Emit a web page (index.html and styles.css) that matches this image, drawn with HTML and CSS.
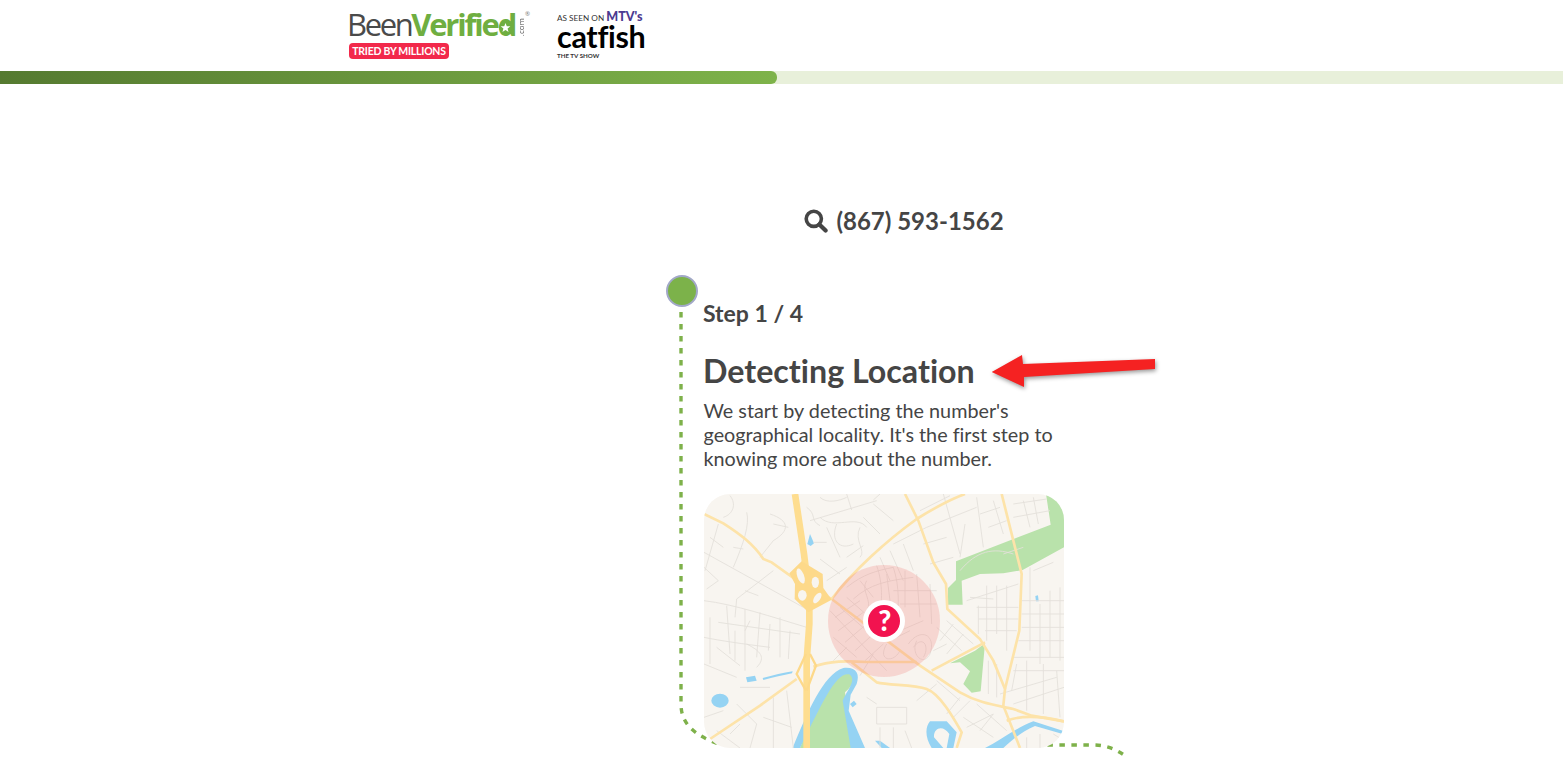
FILE: index.html
```html
<!DOCTYPE html>
<html lang="en">
<head>
    <meta charset="UTF-8">
    <title>BeenVerified - Detecting Location</title>
    <link rel="stylesheet" href="styles.css">
</head>
<body>

    <!-- Logos -->
    <header class="header">
        <div class="brand">
            <div class="brand-name">
                <span class="brand-been">Been</span><span class="brand-verified">Verified<svg class="brand-star" viewBox="0 0 20 20" width="13" height="13"><circle cx="10" cy="10" r="10" fill="#6fae41"></circle><path d="M10 3 L12 8 L17.5 8.2 L13.2 11.6 L14.7 17 L10 13.9 L5.3 17 L6.8 11.6 L2.5 8.2 L8 8 Z" fill="#ffffff"></path></svg></span>
                <span class="brand-com">.com</span>
                <span class="brand-reg">®</span>
            </div>
            <div class="brand-badge">TRIED BY MILLIONS</div>
        </div>
        <div class="catfish">
            <div class="catfish-top">AS SEEN ON <span class="catfish-mtv">MTV's</span></div>
            <div class="catfish-name">catfish</div>
            <div class="catfish-sub">THE TV SHOW</div>
        </div>
    </header>

    <!-- Progress bar -->
    <div class="progress">
        <div class="progress-fill"></div>
    </div>

    <main class="content">
        <div class="search-row">
            <svg class="search-icon" viewBox="0 0 24 24" width="24" height="24">
                <circle cx="9.8" cy="9.8" r="7.6" fill="none" stroke="#454545" stroke-width="3.6"></circle>
                <path d="M15.4 15.4 L21.6 21.6" fill="none" stroke="#454545" stroke-width="4.2" stroke-linecap="round"></path>
            </svg>
            <span class="search-number">(867) 593-1562</span>
        </div>

        <section class="step">
            <!-- Timeline behind the step -->
            <svg class="timeline" viewBox="0 0 480 480" width="480" height="480">
                <path d="M5 5 V397 C5 416 17 428 45 438 H417 C430 438 440 442 451 450" fill="none" stroke="#7eb14a" stroke-width="3.4" stroke-dasharray="5.5 6.5"></path>
            </svg>
            <span class="step-dot"></span>

            <div class="step-count">Step 1 / 4</div>
            <h1 class="step-title">Detecting Location</h1>
            <p class="step-text">We start by detecting the number's geographical locality. It's the first step to knowing more about the number.</p>

            <svg class="step-arrow" viewBox="0 0 170 40" width="170" height="40">
                <path d="M1.7 22 L32 5 L33 14 L165 9 L165 19 L34 27 L34 37 Z" fill="#f52222"></path>
            </svg>

            <!-- Map, drawn in its own coordinates -->
            <svg class="map" viewBox="132 30 1080 762" width="360" height="254">
                <rect x="132" y="30" width="1080" height="762" fill="#f8f5f0"></rect>

                <!-- parks and water -->
                <g fill="#b9e2ab">
                    <path d="M1158 30 H1212 V190 L1088 258 L1030 268 L960 270 L905 290 L908 362 H864 V312 L888 288 V232 L1172 122 Z"></path>
                    <path d="M870 538 L945 500 L975 478 L962 622 L935 626 L910 600 L930 562 L900 535 Z"></path>
                    <path d="M455 700 C490 640 520 570 565 568 C590 575 585 600 555 625 L575 792 H420 Z"></path>
                </g>
                <g fill="#95d3f3">
                    <path d="M398 792 C440 690 490 570 550 552 C590 548 600 570 590 600 L572 632 L566 680 L615 792 H572 L548 650 C560 620 590 590 570 572 C530 560 490 650 420 792 Z"></path>
                    <ellipse cx="180" cy="650" rx="26" ry="21"></ellipse>
                    <path d="M258 580 L285 575 L290 590 L262 595 Z"></path>
                    <path d="M308 582 C340 574 370 566 398 562 L396 568 C370 574 340 580 310 588 Z"></path>
                    <path d="M442 180 L450 150 L462 178 L452 186 Z"></path>
                    <path d="M570 660 L582 650 L590 660 L578 670 Z"></path>
                    <path d="M1126 336 L1134 334 L1136 352 L1128 352 Z"></path>
                    <path d="M645 770 L665 792 H690 L660 770 Z"></path>
                </g>
                <path d="M975 792 C1020 770 1070 730 1120 712 L1208 740 V750 L1125 726 C1080 745 1050 775 1030 792 Z M810 712 H860 L890 745 L880 792 H860 L868 750 C850 722 820 730 822 760 L850 792 H815 C795 760 795 730 810 712 Z" fill="#95d3f3"></path>

                <!-- minor streets -->
                <g fill="none" stroke="#e3e0da" stroke-width="2.6">
                    <path d="M132 205 L430 370 M132 350 C220 360 340 400 440 430 M132 460 C180 470 250 480 330 490 M150 400 V540 M200 365 L210 510 M255 375 V560 M300 385 L290 520 M360 400 V520 M132 540 L230 580 M260 480 C300 500 320 520 290 550 M175 415 L420 450 M225 440 V530 M330 420 L325 500 M390 440 L385 525 M170 490 L240 545 M270 410 L255 440"></path>
                    <path d="M175 120 L135 260 M260 85 C270 120 250 180 220 250 M330 90 C390 110 390 140 340 170 L300 220 M132 250 L175 290 L140 315 M340 260 L230 345 L225 400 M255 320 L295 335 M210 35 C230 60 220 90 190 100 M150 160 L190 190 M220 190 L250 195 M340 120 L385 130"></path>
                    <path d="M440 70 C470 90 450 110 480 125 M450 110 L650 50 M560 30 L575 78 M640 48 L660 30 M480 100 C520 140 590 90 620 130 M530 120 C510 170 540 200 580 180 M610 100 L660 150 M500 130 L540 220 M460 175 H500 M480 225 L540 270 M500 290 L560 250 M600 130 C580 170 620 200 600 220 M640 60 L700 110 M480 40 C500 60 540 50 560 40 M560 220 L610 185"></path>
                    <path d="M780 80 L870 35 M800 130 L950 70 M850 30 L900 210 M915 120 L900 220 M950 40 L970 190 M1000 50 L1030 150 M1060 60 L1160 45 M1060 100 L1170 80 M1090 50 L1110 130 M700 180 L800 130 M690 200 L730 290 M730 180 L760 260 M660 220 L690 290 M1120 40 L1135 120 M790 180 L860 160 M810 240 L880 220 M960 90 L1020 70 M985 130 L1040 110"></path>
                    <path d="M900 260 C950 200 1000 190 1060 210 M1030 210 L1090 190 M1120 260 L1180 235 M920 350 L1075 300 M980 305 V470 M1010 305 V450 M1040 305 V500 M955 365 V450 M950 370 H1075 M955 405 H1075 M975 440 H1070 M1110 250 V500 M1140 360 V540 M1170 320 V520 M1200 310 V530 M1085 350 H1212 M1075 470 H1212 M1085 430 H1212 M1085 390 H1212 M930 340 L1000 345"></path>
                    <path d="M560 310 C610 270 650 260 700 250 M580 345 C630 300 680 290 760 280 M650 245 C670 300 665 360 660 380 M700 250 C720 310 715 370 712 400 M735 260 V370 M770 270 L780 400 M810 300 L815 420 M600 290 L640 340 M700 320 H830 M720 360 H830 M525 400 L600 350 M535 440 L610 385 M555 475 L620 420 M585 500 L640 450 M615 530 L670 480 M510 380 L680 560 M640 510 L600 575 M680 480 C650 530 700 540 720 500 M745 480 C780 430 830 450 810 510 C790 550 750 510 770 470 M760 490 C790 450 810 490 790 520 M830 430 L905 500 M860 410 L940 480 M880 420 L840 470 M910 450 L860 510 M820 500 L860 480 M620 290 C600 320 640 350 620 380 M680 270 L690 350 M540 370 L620 440 M560 340 L640 410 M720 440 L790 410 M690 470 L750 440 M520 460 L590 520 M560 490 L520 530"></path>
                    <path d="M650 670 H740 V720 H650 Z M660 730 V792 M700 730 V792 M735 740 L755 792 M770 650 L830 600 M830 590 L900 650 M900 640 L860 690 M930 650 L880 700 M910 700 L1000 760 M950 660 L1040 740 M1000 690 L960 740 M1020 630 L1190 580 M1060 660 L1212 610 M1100 530 V680 M1150 540 V690 M1190 560 L1200 700 M985 530 V630 M1010 540 V640 M1055 620 L1070 540 M1060 520 H1212 M1060 560 H1212 M920 730 L1000 690 M1180 750 L1212 770 M1100 760 V792 M1140 750 V792 M620 640 L650 660"></path>
                    <path d="M132 700 L190 680 M230 660 L290 720 L270 792 M170 740 L240 792 M340 640 V792 M380 620 L400 792 M310 700 L395 730 M210 750 L240 720 M240 610 L330 610"></path>
                </g>

                <!-- secondary roads -->
                <g fill="none" stroke="#fde3a9" stroke-width="8">
                    <path d="M132 90 L190 118 C240 150 280 180 310 225 L335 235 L405 285 L515 345 L780 545 L900 625 C960 660 1020 665 1060 675 L1115 695 L1212 712"></path>
                    <path d="M150 765 L300 665 L410 585"></path>
                    <path d="M515 345 C580 260 680 170 770 105 C810 80 860 50 915 30"></path>
                    <path d="M735 30 L775 110 L820 235 L858 300 L862 375 L960 465 L1000 530 L1035 615 L1030 665 L1080 792"></path>
                    <path d="M1025 30 L1085 270 L1078 440 L1035 615"></path>
                    <path d="M460 548 C510 530 560 530 620 534 H770"></path>
                    <path d="M575 535 L650 595 C690 605 760 600 800 615 C840 630 880 700 905 745 L890 792"></path>
                    <path d="M815 560 L975 475"></path>
                    <path d="M1040 710 C1080 695 1140 695 1212 712"></path>
                </g>

                <!-- freeway and interchange -->
                <g fill="none" stroke="#fedd8f" stroke-width="20">
                    <path d="M405 30 L432 210 L448 340 V420 L440 530 V792"></path>
                </g>
                <path d="M425 232 L388 268 L405 300 L404 345 L445 385 L515 347 L490 312 L488 270 Z" fill="#fdd98a"></path>
                <g fill="#f8f5f0">
                    <ellipse cx="422" cy="276" rx="10" ry="24" transform="rotate(-20 422 276)"></ellipse>
                    <ellipse cx="466" cy="295" rx="11" ry="17"></ellipse>
                    <ellipse cx="427" cy="334" rx="13" ry="16"></ellipse>
                    <ellipse cx="472" cy="342" rx="9" ry="18" transform="rotate(35 472 342)"></ellipse>
                </g>
                <g fill="none" stroke="#fdd98a" stroke-width="7">
                    <path d="M438 510 L410 570 L438 620 M450 510 L468 545 L440 620"></path>
                </g>

                <!-- detection area -->
                <circle cx="672" cy="411" r="168" fill="#f3766f" fill-opacity="0.24"></circle>
                <circle cx="672" cy="411" r="63" fill="#ffffff"></circle>
                <circle cx="672" cy="411" r="48" fill="#f2134f"></circle>
                <text class="map-mark" x="674" y="442">?</text>
            </svg>
        </section>
    </main>

</body>
</html>
```

FILE: styles.css
```css
html, body {
    height: 784px;
    overflow: hidden;
}
body {
    font-family: Lato, "Open Sans", sans-serif;
    font-variant-ligatures: none;
    color: #454545;
    background-color: white;
    margin: 0;
}

.header {
    height: 71px;
    padding-left: 349px;
    display: flex;
    gap: 28px;
    align-items: flex-start;
}

.brand {
    width: 180px;
    padding-top: 8px;
}
.brand-name {
    display: flex;
    align-items: baseline;
    height: 35px;
    margin-left: -2px;
    font-family: "Open Sans", sans-serif;
    font-size: 31px;
    line-height: 33px;
    letter-spacing: -2.4px;
}
.brand-been {
    font-weight: 400;
    color: #4a4a4a;
}
.brand-verified {
    position: relative;
    font-weight: 700;
    color: #6fae41;
    letter-spacing: -2.2px;
}
.brand-star {
    position: absolute;
    right: 3px;
    bottom: 7px;
}
.brand-com {
    font-size: 8px;
    line-height: 8px;
    letter-spacing: 0;
    color: #555;
    writing-mode: vertical-rl;
    transform: rotate(180deg);
    margin-left: 2px;
}
.brand-reg {
    font-size: 6px;
    line-height: 6px;
    letter-spacing: 0;
    color: #777;
    align-self: flex-start;
    margin-top: 3px;
}
.brand-badge {
    width: 100px;
    height: 16px;
    background-color: #f2294b;
    color: white;
    border-radius: 4px;
    font-size: 10.5px;
    font-weight: 700;
    line-height: 16px;
    text-align: center;
    letter-spacing: -0.25px;
}

.catfish {
    color: black;
    padding-top: 11px;
}
.catfish-top {
    font-size: 8.2px;
    line-height: 11px;
    color: #333;
    white-space: nowrap;
}
.catfish-mtv {
    font-size: 12.5px;
    font-weight: 900;
    color: #4b3a91;
}
.catfish-name {
    font-size: 30.5px;
    font-weight: 700;
    line-height: 24px;
    letter-spacing: -0.3px;
}
.catfish-sub {
    font-size: 6.2px;
    font-weight: 700;
    line-height: 8px;
    margin-top: 4px;
    color: #333;
}

.progress {
    height: 13px;
    background-color: #e8f0da;
}
.progress-fill {
    width: 777px;
    height: 13px;
    background: linear-gradient(to right, #557a30, #7eb34a);
    border-radius: 0 6px 6px 0;
}

.content {
    width: 400px;
    margin-left: 704px;
    padding-top: 123px;
}

.search-row {
    display: flex;
    justify-content: center;
    align-items: center;
    gap: 8px;
    height: 28px;
}
.search-number {
    font-size: 24px;
    font-weight: 700;
    line-height: 28px;
}

.step {
    position: relative;
    padding-top: 64px;
}
.timeline {
    position: absolute;
    left: -28px;
    top: 72px;
    overflow: visible;
}
.step-dot {
    position: absolute;
    left: -38px;
    top: 40px;
    width: 28px;
    height: 28px;
    background-color: #7cb24a;
    border: 2px solid #a2a8c8;
    border-radius: 50%;
}
.step-count {
    font-size: 23px;
    font-weight: 700;
    line-height: 28px;
    margin-left: -1px;
}
.step-title {
    font-size: 32.2px;
    font-weight: 700;
    line-height: 40px;
    margin: 24px 0 7px -1px;
}
.step-text {
    width: 380px;
    font-size: 19.8px;
    line-height: 24px;
    margin: 0 0 24px -0.5px;
}
.step-arrow {
    position: absolute;
    left: 286px;
    top: 115px;
    filter: drop-shadow(1px 2px 2px rgba(0, 0, 0, 0.4));
}
.map {
    display: block;
    position: relative;
    border-radius: 26px;
}
.map-mark {
    font-family: Lato, sans-serif;
    font-size: 84px;
    font-weight: 900;
    fill: white;
    text-anchor: middle;
}
```
